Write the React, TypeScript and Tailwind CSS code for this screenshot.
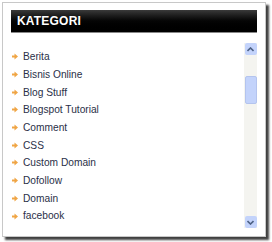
import React from "react";

const categories = [
  "Berita",
  "Bisnis Online",
  "Blog Stuff",
  "Blogspot Tutorial",
  "Comment",
  "CSS",
  "Custom Domain",
  "Dofollow",
  "Domain",
  "facebook",
];

const Arrow = () => (
  <svg width="6" height="7" viewBox="0 0 6 7" className="shrink-0">
    <path d="M0 2.5h2.5V0.5L6 3.5 2.5 6.5V4.5H0z" fill="#f0a545" />
  </svg>
);

export default function App() {
  return (
    <div className="w-[272px] h-[242px] bg-white p-[2px] font-['Liberation_Sans',sans-serif]">
      <div className="w-[264px] h-[235px] border border-[#c8c8c8] bg-white shadow-[3px_3px_2px_rgba(0,0,0,0.75)] px-[8px] pt-[7px]">
        <div className="h-[23px] bg-gradient-to-b from-[#3a3a3a] via-[#050505] to-black border-b border-[#888] flex items-center pl-[6px]">
          <span className="text-white font-bold text-[12px] tracking-[0.2px]">KATEGORI</span>
        </div>
        <div className="flex mt-[10px]">
          <ul className="flex-1 pt-[5px]">
            {categories.map((c) => (
              <li key={c} className="h-[17.7px] flex items-center gap-[5px] pl-[1px]">
                <Arrow />
                <span className="text-[10.2px] text-[#2a3048]">{c}</span>
              </li>
            ))}
          </ul>
          <div className="w-[13px] h-[185px] bg-[#f4f4f0] flex flex-col items-center justify-between">
            <div className="w-[12px] h-[12px] rounded-[2px] bg-[#c3d3fb] flex items-center justify-center">
              <svg width="7" height="5" viewBox="0 0 7 5">
                <path d="M0.5 4L3.5 1L6.5 4" stroke="#4d6185" strokeWidth="1.6" fill="none" />
              </svg>
            </div>
            <div className="flex-1 w-full relative">
              <div className="absolute left-[0.5px] top-[21px] w-[12px] h-[28px] rounded-[2px] bg-[#c3d3fb] border border-[#b4c4ee]" />
            </div>
            <div className="w-[12px] h-[12px] rounded-[2px] bg-[#c3d3fb] flex items-center justify-center">
              <svg width="7" height="5" viewBox="0 0 7 5">
                <path d="M0.5 1L3.5 4L6.5 1" stroke="#4d6185" strokeWidth="1.6" fill="none" />
              </svg>
            </div>
          </div>
        </div>
      </div>
    </div>
  );
}
